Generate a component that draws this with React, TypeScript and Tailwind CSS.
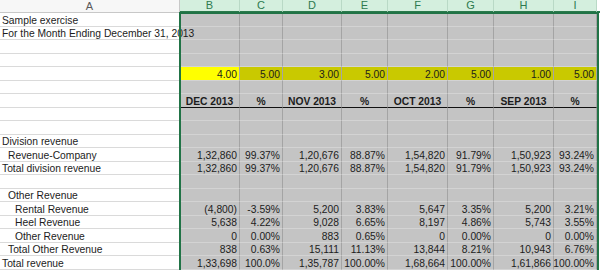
import React from "react";

type Row = {
  label?: string;
  indent?: number;
  cells?: string[];
  kind?: "yellow" | "head";
};

const cols = ["B", "C", "D", "E", "F", "G", "H", "I"];
const grid = "grid grid-cols-[180px_60px_43px_59px_46px_60px_46px_60px_43px_3px]";

const rows: Row[] = [
  { label: "Sample exercise" },
  { label: "For the Month Ending December 31, 2013" },
  {},
  {},
  { kind: "yellow", cells: ["4.00", "5.00", "3.00", "5.00", "2.00", "5.00", "1.00", "5.00"] },
  {},
  { kind: "head", cells: ["DEC 2013", "%", "NOV 2013", "%", "OCT 2013", "%", "SEP 2013", "%"] },
  {},
  {},
  { label: "Division revenue" },
  { label: "Revenue-Company", indent: 1, cells: ["1,32,860", "99.37%", "1,20,676", "88.87%", "1,54,820", "91.79%", "1,50,923", "93.24%"] },
  { label: "Total division revenue", cells: ["1,32,860", "99.37%", "1,20,676", "88.87%", "1,54,820", "91.79%", "1,50,923", "93.24%"] },
  {},
  { label: "Other Revenue", indent: 1 },
  { label: "Rental Revenue", indent: 2, cells: ["(4,800)", "-3.59%", "5,200", "3.83%", "5,647", "3.35%", "5,200", "3.21%"] },
  { label: "Heel Revenue", indent: 2, cells: ["5,638", "4.22%", "9,028", "6.65%", "8,197", "4.86%", "5,743", "3.55%"] },
  { label: "Other Revenue", indent: 2, cells: ["0", "0.00%", "883", "0.65%", "0", "0.00%", "0", "0.00%"] },
  { label: "Total Other Revenue", indent: 1, cells: ["838", "0.63%", "15,111", "11.13%", "13,844", "8.21%", "10,943", "6.76%"] },
  { label: "Total revenue", cells: ["1,33,698", "100.0%", "1,35,787", "100.00%", "1,68,664", "100.00%", "1,61,866", "100.00%"] },
];

const indents = ["pl-[2px]", "pl-[8px]", "pl-[15px]"];

function SheetRow({ row, odd }: { row: Row; odd: boolean }) {
  const h = odd ? "h-[14px]" : "h-[13px]";
  return (
    <div className={`${grid} ${h}`}>
      <div
        className={`relative z-10 flex items-end whitespace-nowrap bg-white border-b border-[#dadada] ${indents[row.indent ?? 0]}`}
      >
        {row.label}
      </div>
      {cols.map((c, i) => {
        const val = row.cells?.[i] ?? "";
        let bg = "bg-[#c4c4c4]";
        if (row.kind === "yellow") bg = i === 0 ? "bg-[#ffff00]" : "bg-[#c9c900]";
        const bottom = row.kind === "head" ? "border-b-[#111]" : "border-b-[#d3d3d3]";
        const align = row.kind === "head" ? "justify-center font-bold" : "justify-end pr-[2px]";
        return (
          <div
            key={c}
            className={`flex items-end whitespace-nowrap border-r border-b border-r-[#a4a4a4] ${bottom} ${bg} ${align}`}
          >
            {val}
          </div>
        );
      })}
      <div className="bg-white" />
    </div>
  );
}

export default function App() {
  return (
    <div className="relative w-[600px] h-[270px] overflow-hidden bg-white text-[10.3px] leading-none text-[#1c1c1c] font-['Liberation_Sans',Arial,sans-serif]">
      {/* column headers */}
      <div className={`${grid} h-[13px] text-[11px]`}>
        <div className="flex items-center justify-center bg-[#f7f7f7] border-b border-r border-[#c8c8c8] text-[#5a5a5a]">
          A
        </div>
        {cols.map((c) => (
          <div
            key={c}
            className="flex items-center justify-center bg-[#d4efde] border-r border-r-[#b9d9c6] border-b-2 border-b-[#2a7a4c] text-[#2d7a4e]"
          >
            {c}
          </div>
        ))}
        <div className="bg-white border-b-2 border-b-[#2a7a4c]" />
      </div>

      {rows.map((r, i) => (
        <SheetRow key={i} row={r} odd={i % 2 === 0} />
      ))}

      {/* selection outline */}
      <div className="absolute left-[179px] top-[12px] w-[420px] h-[262px] border-2 border-[#217346] z-20 pointer-events-none" />
    </div>
  );
}
